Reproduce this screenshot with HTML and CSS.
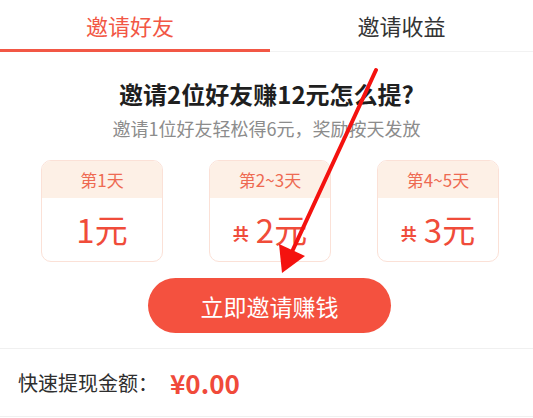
FILE: index.html
```html
<!DOCTYPE html>
<html lang="zh-CN">
<head>
<meta charset="utf-8">
<title>邀请好友</title>
<link rel="stylesheet" href="styles.css">
</head>
<body>
<div class="page">
  <div class="tabs">
    <div class="tab active"><span class="tab-label">邀请好友</span></div>
    <div class="tab"><span class="tab-label">邀请收益</span></div>
  </div>
  <h1 class="title">邀请2位好友赚12元怎么提?</h1>
  <p class="subtitle">邀请1位好友轻松得6元，奖励按天发放</p>
  <div class="cards">
    <div class="card">
      <div class="card-head">第1天</div>
      <div class="card-body"><span class="amount">1元</span></div>
    </div>
    <div class="card">
      <div class="card-head">第2~3天</div>
      <div class="card-body"><span class="total">共</span><span class="amount">2元</span></div>
    </div>
    <div class="card">
      <div class="card-head">第4~5天</div>
      <div class="card-body"><span class="total">共</span><span class="amount">3元</span></div>
    </div>
  </div>
  <div class="btn-row"><button class="invite-btn">立即邀请赚钱</button></div>
  <div class="withdraw">
    <span class="withdraw-label">快速提现金额：</span><span class="withdraw-value">¥0.00</span>
  </div>
  <svg class="arrow" width="533" height="418" viewBox="0 0 533 418">
    <line x1="376" y1="70" x2="290" y2="256" stroke="#f4120f" stroke-width="4" stroke-linecap="round"/>
    <polygon points="282,273 279,244 305,256" fill="#f4120f"/>
  </svg>
</div>
</body>
</html>
```
FILE: styles.css
```css
* { box-sizing: border-box; }
html, body { margin: 0; padding: 0; background: #ffffff; }
body {
  font-family: "Noto Sans CJK SC", "Noto Sans", sans-serif;
  width: 533px;
  height: 418px;
  overflow: hidden;
}
.page { position: relative; width: 533px; height: 418px; }
.tabs {
  display: grid;
  grid-template-columns: 270px 1fr;
  height: 52px;
}
.tab {
  display: flex;
  align-items: center;
  justify-content: center;
  font-size: 22px;
  color: #333333;
  border-bottom: 1px solid #f2f2f2;
  padding-bottom: 2px;
}
.tab.active {
  color: #f25745;
  border-bottom: 3px solid #f25745;
  padding-right: 10px;
  padding-bottom: 0;
}
.title {
  margin: 26px 0 0;
  text-align: center;
  font-size: 24px;
  line-height: 32px;
  font-weight: 700;
  color: #1f1f1f;
}
.subtitle {
  margin: 6px 0 0;
  text-align: center;
  font-size: 18px;
  line-height: 24px;
  color: #8c8c8c;
}
.cards {
  display: flex;
  gap: 46px;
  padding-left: 41px;
  margin-top: 20px;
}
.card {
  width: 122px;
  height: 102px;
  border: 1px solid #fbe1d7;
  border-radius: 10px;
  overflow: hidden;
  display: flex;
  flex-direction: column;
}
.card-head {
  height: 37px;
  background: #fdf0e6;
  color: #ee6a52;
  font-size: 17px;
  display: flex;
  align-items: center;
  justify-content: center;
}
.card-body {
  flex: 1;
  display: flex;
  align-items: center;
  justify-content: center;
  color: #f04c3a;
}
.amount { font-size: 33px; line-height: 1; }
.total { font-size: 16px; margin-right: 7px; margin-top: 6px; font-weight: 700; }
.btn-row { margin-top: 16px; padding-left: 148px; }
.invite-btn {
  width: 243px;
  height: 55px;
  border: none;
  border-radius: 28px;
  background: #f4513f;
  color: #ffffff;
  font-family: "Noto Sans CJK SC", "Noto Sans", sans-serif;
  font-size: 23px;
  padding: 0;
  display: flex;
  align-items: center;
  justify-content: center;
}
.withdraw {
  margin-top: 15px;
  border-top: 1px solid #f0f0f0;
  border-bottom: 1px solid #f0f0f0;
  height: 69px;
  display: flex;
  align-items: center;
  padding-left: 18px;
}
.withdraw-label { font-size: 20px; color: #2e2e2e; }
.withdraw-value { font-size: 26px; font-weight: 700; color: #f04a3a; margin-left: 12px; }
.arrow { position: absolute; left: 0; top: 0; pointer-events: none; }
```
